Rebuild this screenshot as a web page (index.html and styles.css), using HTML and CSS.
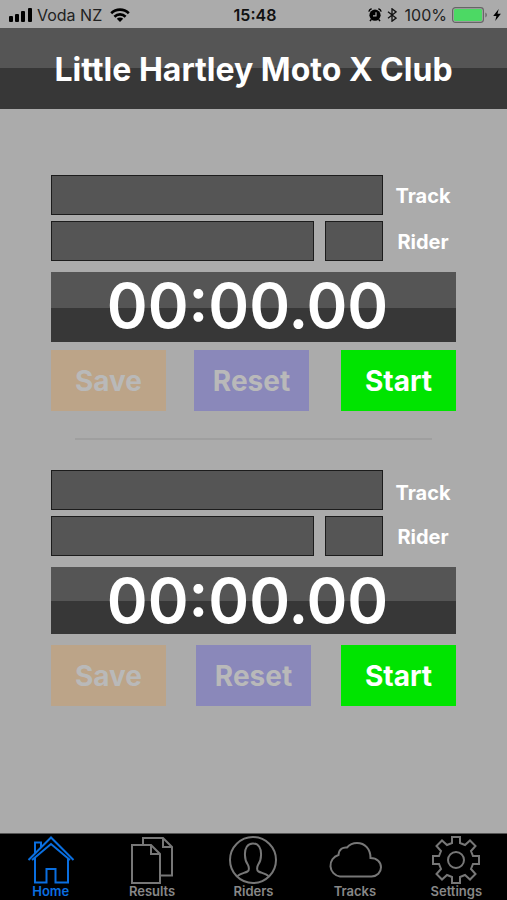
FILE: index.html
```html
<!DOCTYPE html>
<html lang="en">
<head>
<meta charset="utf-8">
<meta name="viewport" content="width=device-width, initial-scale=1">
<title>Little Hartley Moto X Club</title>
<link rel="stylesheet" href="styles.css">
</head>
<body>
<div class="app">
  <div class="status">
    <div class="status-side">
      <svg class="signal" viewBox="0 0 23 14" width="23" height="14" aria-hidden="true"><rect x="0" y="8" width="4" height="6" rx="1"/><rect x="6" y="6" width="4" height="8" rx="1"/><rect x="12" y="3" width="4" height="11" rx="1"/><rect x="19" y="0" width="4" height="14" rx="1"/></svg>
      <span class="carrier">Voda NZ</span>
      <svg viewBox="0 0 20 14" width="20" height="14" aria-hidden="true"><g fill="none" stroke="#000" stroke-width="2.6"><path d="M1.2 5.2a12.6 12.6 0 0 1 17.6 0"/><path d="M4.4 8.7a8 8 0 0 1 11.2 0"/></g><path d="M6.8 10.7a4.6 4.6 0 0 1 6.4 0L10 14z"/></svg>
    </div>
    <time class="clock">15:48</time>
    <div class="status-side status-end">
      <svg viewBox="0 0 14 14" width="14" height="14" aria-hidden="true"><circle cx="7" cy="7.2" r="5.6"/><path d="M.8 3.6A4 4 0 0 1 3.600.8M13.2 3.6A4 4 0 0 0 10.400.8M3.2 11.500l-1.200 1.700M10.800 11.500l1.200 1.700" fill="none" stroke="#000" stroke-width="1.4"/><path d="M8 4.200v3.600H5" fill="none" stroke="#ababab" stroke-width="1.2"/></svg>
      <svg class="bluetooth" viewBox="0 0 10 14" width="10" height="14" aria-hidden="true"><path d="M1 3.800l8 6.300L5 13.200V.8l4 3.100-8 6.300" fill="none" stroke="#111" stroke-width="1.3"/></svg>
      <span class="percent">100%</span>
      <svg class="battery" viewBox="0 0 36 16" width="36" height="16" aria-hidden="true"><rect x=".6" y=".6" width="30.8" height="14.8" rx="2.8" fill="none" stroke="#666" stroke-width="1.2"/><rect x="2" y="2" width="28" height="12" rx="1.2" fill="#4cd964"/><path d="M33.400 5.500c2 1 2 4 0 5z" fill="#666"/></svg>
      <svg viewBox="0 0 8 12" width="8" height="12" aria-hidden="true"><path d="M5.700 0L.2 7h3.200L2.200 12 7.900 4.800H4.500z"/></svg>
    </div>
  </div>
  <header class="banner"><h1>Little Hartley Moto X Club</h1></header>
  <main class="content">
    <section class="panel panel-first" aria-label="Timer 1">
      <div class="field-row">
        <input class="field" id="track1" type="text"><label class="caption" for="track1">Track</label>
      </div>
      <div class="field-row">
        <div class="rider"><input class="field" id="rider1" type="text"><input class="field" type="text" aria-label="Rider number"></div><label class="caption" for="rider1">Rider</label>
      </div>
      <output class="timer">00:00.00</output>
      <div class="actions">
        <button class="save" type="button" disabled>Save</button>
        <button class="reset" type="button" disabled>Reset</button>
        <button class="start" type="button">Start</button>
      </div>
    </section>
    <hr>
    <section class="panel panel-second" aria-label="Timer 2">
      <div class="field-row">
        <input class="field" id="track2" type="text"><label class="caption caption-low" for="track2">Track</label>
      </div>
      <div class="field-row">
        <div class="rider"><input class="field" id="rider2" type="text"><input class="field" type="text" aria-label="Rider number"></div><label class="caption" for="rider2">Rider</label>
      </div>
      <output class="timer">00:00.00</output>
      <div class="actions">
        <button class="save" type="button" disabled>Save</button>
        <button class="reset" type="button" disabled>Reset</button>
        <button class="start" type="button">Start</button>
      </div>
    </section>
  </main>
  <nav class="tabs">
    <a class="tab active" href="#home" aria-current="page">
      <svg viewBox="0 0 48 48" width="48" height="48" aria-hidden="true"><path d="M1.500 24L24 1.500 46.500 24M5 24L24 8 43 24M8 18V6.500h6V11M8 22V46.500h11.500V33h9v13.500H41V22"/></svg>
      <span>Home</span></a>
    <a class="tab" href="#results">
      <svg viewBox="0 0 48 48" width="48" height="48" aria-hidden="true"><path d="M4 9h19l9 9v29H4zM23 9v9h9M15 9V2h20l9 9v28.500H32M35 2v9h9"/></svg>
      <span>Results</span></a>
    <a class="tab" href="#riders">
      <svg viewBox="0 0 48 48" width="48" height="48" aria-hidden="true"><circle cx="24" cy="24" r="23"/><path d="M8.500 40c3-2.500 7-3 10-4.500 2-1 1.500-4.500.5-6.500-2.200-3-3-5.500-3-9.500C15.500 12 18.500 7.500 24 7.500S32.500 12 32 19.500c0 4-.8 6.500-3 9.500-1 2-1.500 5.500.5 6.500 3 1.500 7 2 10 4.500"/></svg>
      <span>Riders</span></a>
    <a class="tab" href="#tracks">
      <svg viewBox="0 0 54 48" width="54" height="48" aria-hidden="true"><path d="M12 40.500a11 11 0 0 1-1.500-21.500c.5-6 4.500-8 8.500-7.500C22 8 25.500 7 29 7c8 0 13.500 6 13.500 15C49 22 53 26 53 31.200s-4 9.300-9.500 9.300z"/></svg>
      <span>Tracks</span></a>
    <a class="tab" href="#settings">
      <svg viewBox="0 0 48 48" width="48" height="48" aria-hidden="true"><circle cx="24" cy="24" r="8"/><path d="M20 1h8v6l5 2 5-4.500 5.500 5.500-4.500 5 2 5h6v8h-6l-2 5 4.500 5-5.500 5.500-5-4.500-5 2v6h-8v-6l-5-2-5 4.500L4.500 38 9 33l-2-5H1v-8h6l2-5-4.500-5L10 4.500 15 9l5-2z"/></svg>
      <span>Settings</span></a>
  </nav>
</div>
</body>
</html>
```
FILE: styles.css
```css
* { box-sizing: border-box; }
body {
  margin: 0;
  background: #ababab;
  font-family: Inter, "Liberation Sans", sans-serif;
  color: #fff;
}
.app { min-height: 100vh; display: flex; flex-direction: column; }

.status {
  height: 28px;
  padding: 2px 6px 0 9px;
  display: grid;
  grid-template-columns: 1fr auto 1fr;
  align-items: center;
  font-size: 16px;
  color: #111;
}
.status-side { display: flex; align-items: center; gap: 5px; }
.status-side svg { flex: none; }
.carrier { margin-right: 3px; color: #222; }
.status-end { justify-content: flex-end; }
.clock { font-weight: 600; }
.percent { margin-left: 3px; color: #222; }

.banner {
  height: 81px;
  padding: 3px 12px 0;
  display: flex;
  align-items: center;
  justify-content: center;
  background: linear-gradient(#555 50%, #373737 50%);
}
h1 { margin: 0; font-size: 32px; line-height: 40px; font-weight: 700; white-space: nowrap; }

.content { flex: 1; padding: 66px 51px 24px; }
.panel { display: flex; flex-direction: column; }
.field-row {
  display: grid;
  grid-template-columns: 1fr 66px;
  gap: 7px;
  align-items: center;
  margin-bottom: 6px;
}
.rider { display: grid; grid-template-columns: 1fr 58px; gap: 11px; }
.field {
  width: 100%;
  min-width: 0;
  height: 40px;
  padding: 0 8px;
  border: 1px solid #1c1c1c;
  border-radius: 0;
  background: #555;
  color: #fff;
  font: 600 20px Inter, sans-serif;
}
.caption { padding-top: 2px; font-size: 20px; line-height: 24px; font-weight: 700; text-align: center; }
.caption-low { padding-top: 6px; }
.timer {
  height: 70px;
  margin-top: 5px;
  display: flex;
  align-items: center;
  justify-content: center;
  padding-right: 12px;
  background: linear-gradient(#555 36px, #373737 36px);
  font-size: 62px;
  line-height: 64px;
  font-weight: 600;
}
.actions {
  display: grid;
  grid-template-columns: 115px 115px 115px;
  justify-content: space-between;
  margin-top: 8px;
}
button {
  height: 61px;
  padding: 1px 0 0;
  border: 0;
  font: 700 28px Inter, sans-serif;
  color: #fff;
}
button:disabled { color: #b9b9b9; }
.save { background: #bca488; }
.reset { background: #8a88ba; }
.start { background: #00e400; }
hr {
  height: 2px;
  margin: 27px 24px 30px;
  border: 0;
  background: #9f9f9f;
}
.panel-first .timer { padding-bottom: 3px; }
.panel-first .actions { grid-template-columns: 143px 147px 115px; }
.panel-first .save, .panel-first .reset { width: 115px; }
.panel-second .timer { height: 67px; background: linear-gradient(#555 34px, #373737 34px); }
.panel-second .actions { margin-top: 11px; }

.tabs {
  height: 67px;
  padding-top: 2px;
  border-top: 1px solid #555;
  display: grid;
  grid-template-columns: repeat(5, 1fr);
  background: #000;
}
.tab {
  display: flex;
  flex-direction: column;
  align-items: center;
  color: #888;
  font-size: 13px;
  line-height: 14px;
  font-weight: 600;
  text-decoration: none;
}
.tab svg { fill: none; stroke: #777; stroke-width: 2; }
.active { color: #0a6fe0; }
.active svg { stroke: #0a6fe0; }
```
